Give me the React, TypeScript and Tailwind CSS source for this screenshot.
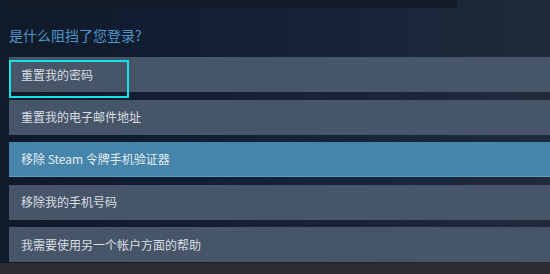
const options = [
  "重置我的密码",
  "重置我的电子邮件地址",
  "移除 Steam 令牌手机验证器",
  "移除我的手机号码",
  "我需要使用另一个帐户方面的帮助",
];

export default function App() {
  return (
    <div
      className="relative flex h-[274px] w-[550px] flex-col overflow-hidden bg-gradient-to-r from-[#0f1a2a] via-[#142137] to-[#1f2b3b]"
      style={{ fontFamily: '"Noto Sans CJK SC", "Noto Sans", sans-serif' }}
    >
      {/* top strip */}
      <div className="ml-[9px] h-[8px] w-[448px] bg-[#111a27]" />

      <h1 className="mt-[17px] pl-[9px] text-[14px] leading-[20px] font-normal text-[#4f95c8]">
        是什么阻挡了您登录?
      </h1>

      <div className="mt-[12px] flex flex-col gap-[7.5px] pl-[9px]">
        {options.map((text, i) => (
          <div
            key={i}
            className={
              i === 2
                ? "flex h-[35px] items-center border-b border-[#5a9cc4] bg-[#4684aa] pl-[12px] text-[12px] text-[#e2ecf3]"
                : "flex h-[35px] items-center bg-[#475569] pl-[12px] text-[12px] text-[#d9dee4]"
            }
          >
            {text}
          </div>
        ))}
      </div>

      <div className="mt-auto h-[11px] bg-[#2a2c30]" />

      {/* highlight box */}
      <div className="absolute left-[9px] top-[60px] h-[38px] w-[120px] border-2 border-[#14e1e8]" />
    </div>
  );
}
